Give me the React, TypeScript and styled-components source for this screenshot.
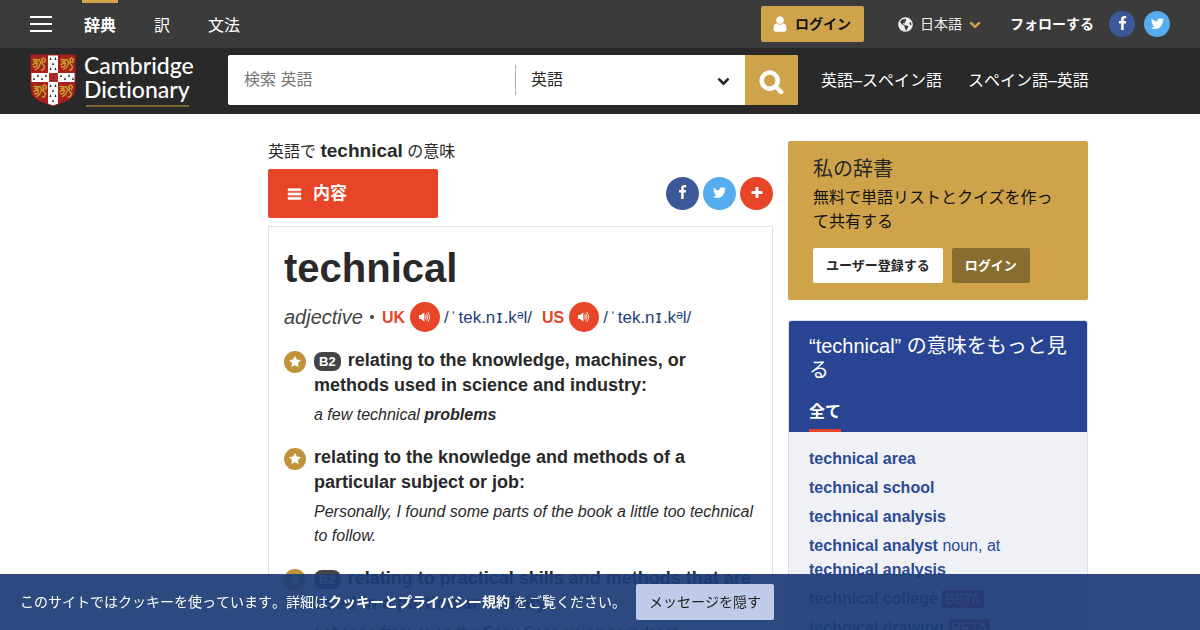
import React from 'react';
import styled, { createGlobalStyle } from 'styled-components';
import { FaGlobeAmericas } from 'react-icons/fa';

const GlobalStyle = createGlobalStyle`
  *, *::before, *::after { box-sizing: border-box; }
  body {
    margin: 0;
    background: #fff;
    color: #292929;
    font: 16px/24px "Liberation Sans", "Noto Sans CJK JP", sans-serif;
  }
  #root { height: 100vh; overflow: hidden; }
  a { color: inherit; text-decoration: none; }
  button, input, select { font: inherit; color: inherit; border: 0; margin: 0; padding: 0; background: none; }
  button { cursor: pointer; }
  h1, h2, h3, p, ul { margin: 0; padding: 0; font-weight: normal; font-size: inherit; }
  ul { list-style: none; }
`;

const paths = {
  facebook:
    'M1343 12v264h-157q-86 0-116 36t-30 108v189h293l-39 296h-254v759h-306v-759h-255v-296h255v-218q0-186 104-288.500t277-102.500q147 0 228 12z',
  twitter:
    'M1684 408q-67 98-162 167 1 14 1 42 0 130-38 259.500t-115.500 248.500-184.500 210.500-258 146-323 54.500q-271 0-496-145 35 4 78 4 225 0 401-138-105-2-188-64.500t-114-159.500q33 5 61 5 43 0 85-11-112-23-185.500-111.500t-73.500-205.500v-4q68 38 146 41-66-44-105-115t-39-154q0-88 44-163 121 149 294.500 238.500t371.500 99.500q-8-38-8-74 0-134 94.500-228.500t228.500-94.500q140 0 236 102 109-21 205-78-37 115-142 178 93-10 186-50z',
  plus: 'M1600 736v192q0 40-28 68t-68 28h-416v416q0 40-28 68t-68 28h-192q-40 0-68-28t-28-68v-416h-416q-40 0-68-28t-28-68v-192q0-40 28-68t68-28h416v-416q0-40 28-68t68-28h192q40 0 68 28t28 68v416h416q40 0 68 28t28 68z',
  user: 'M1536 1399q0 109-62.500 187t-150.500 78h-854q-88 0-150.500-78t-62.500-187q0-85 8.500-160.500t31.500-152 58.500-131 94-89 134.500-34.500q131 128 313 128t313-128q76 0 134.500 34.500t94 89 58.500 131 31.500 152 8.500 160.500zm-256-887q0 159-112.500 271.500t-271.500 112.500-271.500-112.500-112.500-271.500 112.500-271.500 271.500-112.500 271.500 112.500 112.500 271.500z',
  search:
    'M1216 832q0-185-131.500-316.500t-316.500-131.500-316.500 131.500-131.500 316.500 131.500 316.500 316.500 131.500 316.500-131.500 131.500-316.500zm512 832q0 52-38 90t-90 38q-54 0-90-38l-343-342q-179 124-399 124-143 0-273.500-55.500t-225-150-150-225-55.500-273.500 55.500-273.500 150-225 225-150 273.500-55.500 273.500 55.500 225 150 150 225 55.500 273.500q0 220-124 399l343 343q37 37 37 90z',
  chevron:
    'M1683 808l-742 741q-19 19-45 19t-45-19l-742-741q-19-19-19-45.500t19-45.500l166-165q19-19 45-19t45 19l531 531 531-531q19-19 45-19t45 19l166 165q19 19 19 45.500t-19 45.500z',
  bars: 'M128 320h1536v256h-1536zM128 832h1536v256h-1536zM128 1344h1536v256h-1536z',
  star: 'M1728 647q0 22-26 48l-363 354 86 500q1 7 1 20 0 21-10.500 35.500t-30.500 14.500q-19 0-40-12l-449-236-449 236q-22 12-40 12-21 0-31.500-14.500t-10.500-35.500q0-6 2-20l86-500-364-354q-25-27-25-48 0-37 56-46l502-73 225-455q19-41 49-41t49 41l225 455 502 73q56 9 56 46z',
};

const Icon = ({ name, size, bold }: { name: keyof typeof paths; size: number; bold?: boolean }) => (
  <svg
    width={size}
    height={size}
    viewBox="0 0 1792 1792"
    fill="currentColor"
    stroke={bold ? 'currentColor' : 'none'}
    strokeWidth={bold ? 70 : 0}
    aria-hidden="true"
  >
    <path d={paths[name]} />
  </svg>
);

const Speaker = () => (
  <svg width="14" height="12" viewBox="0 0 16 14" fill="none" stroke="#fff" aria-hidden="true">
    <path d="M1 4.800h2.300L7.300 1.500v11L3.300 9.200H1z" fill="#fff" stroke="none" />
    <path d="M8.800 5q1.300 2 0 4M10.100 3.200q2.700 3.800 0 7.600M11.500 1.500q4.100 5.500 0 11" strokeWidth="1" strokeLinecap="round" />
  </svg>
);

const Lion = ({ x, y }: { x: number; y: number }) => (
  <g transform={`translate(${x} ${y})`} fill="none" stroke="#c99a2a" strokeWidth="1.500" strokeLinecap="round">
    <path d="M1 2.500h3M2 4.500l3 .5M1 7.500l4-2M4 3.500l3-1 1 2 2 1.500M5.500 6l-1 3.500-3 .5M8.500 6l-2 4.500-3 2M10 6.500l2.500 3-1 3-2 .5M11 5l-1.500-2.500 2-1.500 2 1.500-1 3" />
    <path d="M6 1l1.500.5M9.500 8l-.5 3M13 7l.5 2" stroke="#6b4a1a" strokeWidth="1" />
  </g>
);

const Crest = () => (
  <svg width="46" height="53" viewBox="0 0 46 53" aria-hidden="true">
    <defs>
      <clipPath id="shield">
        <path d="M1 1h44v33q0 9-9 13l-13 5-13-5q-9-4-9-13z" />
      </clipPath>
    </defs>
    <g clipPath="url(#shield)">
      <path fill="#a81f1c" d="M0 0h46v53H0z" />
      <path fill="#fff" d="M18 1h10v52H18zM1 19h44v9H1z" />
      <path fill="#c1272a" d="M19 19h9v9h-9z" />
      <path fill="#7a3a1c" d="M20 20h7v1h-7zM20 26h7v1h-7zM22 22h3v3h-3z" />
      <path
        fill="#26262b"
        d="M20.500 3l1 3h-2zM25.500 3l1 3h-2zM23 8l1 3h-2zM20.500 13l1 3h-2zM25.500 13l1 3h-2zM20.500 30l1 3h-2zM25.500 30l1 3h-2zM23 35l1 3h-2zM20.500 40l1 3h-2zM25.500 40l1 3h-2zM23 45l1 3h-2zM4 23l1 3H3zM8 20l1 3H7zM12 23l1 3h-2zM16 20l1 3h-2zM31 20l1 3h-2zM35 23l1 3h-2zM39 20l1 3h-2zM43 23l1 3h-2z"
      />
      <Lion x={2} y={3} />
      <Lion x={30} y={3} />
      <Lion x={3} y={30} />
      <Lion x={29} y={30} />
    </g>
    <path d="M1 1h44v33q0 9-9 13l-13 5-13-5q-9-4-9-13z" fill="none" stroke="#a51c20" strokeWidth="1" />
  </svg>
);

const TopBar = styled.div`
  display: flex;
  align-items: center;
  height: 48px;
  padding: 0 30px;
  background: #3b3b3b;
  color: #fff;
`;
const MenuButton = styled.button`
  display: grid;
  gap: 5px;
  width: 22px;
  margin-right: 30px;
`;
const MenuLine = styled.span`
  height: 2px;
  background: #fff;
`;
const Tabs = styled.nav`
  display: flex;
  gap: 34px;
  align-self: stretch;
`;
const Tab = styled.a<{ $active?: boolean }>`
  padding: 11px 2px 0;
  border-top: 3px solid ${(p) => (p.$active ? '#cfa34a' : 'transparent')};
  font-weight: ${(p) => (p.$active ? 'bold' : 'normal')};
`;
const TopActions = styled.div`
  display: flex;
  align-items: center;
  margin-left: auto;
  font-size: 14px;
`;
const Login = styled.button`
  display: flex;
  align-items: center;
  gap: 6px;
  height: 36px;
  padding: 0 13px 0 10px;
  margin-right: 34px;
  border-radius: 2px;
  background: #cfa34a;
  color: #111;
  font-weight: bold;
  svg { color: #fff; }
`;
const Language = styled.button`
  display: flex;
  align-items: center;
  gap: 7px;
  margin-right: 29px;
  color: #eee;
  svg:last-child { color: #cfa34a; }
`;
const Follow = styled.strong`
  margin-right: 15px;
`;
const Round = styled.a<{ $size: number; $color: string }>`
  display: inline-flex;
  align-items: center;
  justify-content: center;
  width: ${(p) => p.$size}px;
  height: ${(p) => p.$size}px;
  padding-bottom: 2px;
  border-radius: 50%;
  background: ${(p) => p.$color};
  color: #fff;
`;
const SocialPair = styled.div`
  display: flex;
  gap: 9px;
`;

const SearchBar = styled.div`
  display: flex;
  align-items: center;
  height: 66px;
  padding: 0 30px 2px;
  background: #292929;
  color: #fff;
`;
const Logo = styled.a`
  display: flex;
  align-items: end;
  gap: 8px;
  width: 198px;
`;
const LogoText = styled.span`
  font: 500 23px/24px Lato, sans-serif;
  font-variant-ligatures: none;
`;
const LogoLine = styled.span`
  display: block;
  width: 103px;
  height: 2px;
  margin: 4px 0 0 2px;
  background: #7e652f;
`;
const SearchForm = styled.form`
  display: flex;
  flex: 0 1 570px;
  height: 50px;
  border-radius: 2px;
  overflow: hidden;
  background: #fff;
  color: #292929;
`;
const SearchInput = styled.input`
  flex: 1;
  min-width: 0;
  padding: 0 16px;
  outline: 0;
  &::placeholder { color: #757575; opacity: 1; }
`;
const Dataset = styled.label`
  display: grid;
  align-items: center;
  width: 230px;
  height: 30px;
  margin: 10px 0;
  border-left: 1px solid #b5b5b5;
  & > * { grid-area: 1 / 1; }
  svg { justify-self: end; margin-right: 15px; pointer-events: none; }
`;
const DatasetSelect = styled.select`
  width: 100%;
  padding-left: 15px;
  appearance: none;
  outline: 0;
`;
const SearchButton = styled.button`
  display: grid;
  place-items: center;
  width: 53px;
  padding-top: 2px;
  background: #cfa34a;
  color: #fff;
`;
const QuickLinks = styled.nav`
  display: flex;
  gap: 26px;
  padding-top: 2px;
  margin-left: 23px;
  white-space: nowrap;
  font-kerning: none;
`;

const Page = styled.div`
  display: grid;
  grid-template-columns: minmax(0, 1fr) 300px;
  gap: 15px;
  max-width: 976px;
  margin: 0 auto;
  padding: 27px 0 0 156px;
`;
const Title = styled.h1`
  height: 28px;
  line-height: 20px;
  font-kerning: none;
  b { font-size: 19px; }
`;
const Tools = styled.div`
  display: flex;
  align-items: center;
  justify-content: space-between;
  margin-bottom: 8px;
`;
const Contents = styled.button`
  display: flex;
  align-items: center;
  gap: 11px;
  width: 170px;
  height: 49px;
  padding: 0 19px;
  border-radius: 2px;
  background: #e84427;
  color: #fff;
  font-size: 17px;
  font-weight: bold;
`;
const Share = styled.div`
  display: flex;
  gap: 4px;
`;
const Entry = styled.article`
  padding: 15px;
  border: 1px solid #e2e2e2;
`;
const Headword = styled.h2`
  font-size: 40px;
  line-height: 52px;
  font-weight: bold;
`;
const Pronunciations = styled.div`
  display: flex;
  align-items: center;
  height: 30px;
  margin: 8px 0 16px;
  color: #1d3e7c;
  font-size: 17px;
`;
const PartOfSpeech = styled.i`
  margin-right: 7px;
  color: #444;
  font-size: 20px;
`;
const Dot = styled.span`
  width: 4px;
  height: 4px;
  margin-right: 8px;
  border-radius: 50%;
  background: #444;
`;
const Region = styled.b`
  padding-top: 2px;
  margin-right: 5px;
  color: #e84427;
  font-size: 16px;
`;
const Listen = styled.button`
  display: grid;
  place-items: center;
  width: 30px;
  height: 30px;
  border-radius: 50%;
  background: #e84427;
`;
const Ipa = styled.span`
  display: flex;
  gap: 2px;
  padding-top: 2px;
  margin: 0 10px 0 4px;
  sup { font-size: 12px; line-height: 0; vertical-align: 4px; }
`;
const SmallCapI = styled.span`
  padding: 0 1px;
  font-family: "DejaVu Sans", sans-serif;
  line-height: 0;
`;
const Sense = styled.section`
  display: grid;
  grid-template-columns: 22px 1fr;
  column-gap: 8px;
  margin-bottom: 18px;
`;
const StarBadge = styled.span`
  display: grid;
  place-items: center;
  width: 22px;
  height: 22px;
  margin-top: 3px;
  border-radius: 50%;
  background: #c0923a;
  color: #fff;
`;
const Definition = styled.h3`
  margin-bottom: 5px;
  font-size: 18px;
  line-height: 25px;
  font-weight: bold;
`;
const Level = styled.span`
  display: inline-block;
  margin-right: 7px;
  padding: 0 5px;
  border-radius: 8px;
  background: #444;
  color: #fff;
  font-size: 13px;
  line-height: 19px;
`;
const Side = styled.aside`
  display: grid;
  gap: 20px;
  align-content: start;
`;
const MyDictionary = styled.section`
  padding: 16px 25px 17px;
  border-radius: 2px;
  background: #cfa34a;
  color: #111;
  h2 { color: #292929; font-size: 20px; line-height: 24px; margin-bottom: 5px; }
`;
const Buttons = styled.div`
  display: flex;
  gap: 9px;
  margin-top: 14px;
`;
const SmallButton = styled.button<{ $dark?: boolean }>`
  height: 35px;
  padding: 0 13px;
  border-radius: 2px;
  background: ${(p) => (p.$dark ? '#886c30' : '#fff')};
  color: ${(p) => (p.$dark ? '#fff' : '#292929')};
  font-size: 13px;
  font-weight: bold;
`;
const More = styled.section`
  border: 1px solid #dcdfea;
  border-radius: 3px;
  overflow: hidden;
  background: #f0f1f7;
`;
const MoreHead = styled.header`
  padding: 13px 20px 0;
  background: #2a4494;
  color: #fff;
  h2 { margin-bottom: 18px; font-size: 20px; line-height: 24px; }
`;
const AllTab = styled.a`
  display: inline-block;
  height: 32px;
  border-bottom: 3px solid #e84427;
  font-weight: bold;
  vertical-align: top;
`;
const Words = styled.ul`
  display: grid;
  gap: 5px;
  padding: 15px 20px;
  color: #2a4a94;
  li { padding-right: 40px; }
`;
const Beta = styled.span`
  padding: 1px 3px;
  border-radius: 2px;
  background: #b3203c;
  color: #fff;
  font-size: 14px;
`;
const CookieBar = styled.div`
  position: fixed;
  inset: auto 0 0;
  display: flex;
  align-items: center;
  gap: 10px;
  padding: 10px 20px;
  background: rgba(28, 60, 118, 0.93);
  color: #fff;
  font-size: 14px;
  font-kerning: none;
`;
const Dismiss = styled.button`
  height: 36px;
  padding: 0 13px;
  border-radius: 2px;
  background: #c0cbe9;
  color: #222;
  font-kerning: none;
`;

const ListenTo = ({ region }: { region: string }) => (
  <>
    <Region>{region}</Region>
    <Listen aria-label={`${region} 発音`}>
      <Speaker />
    </Listen>
    <Ipa>
      <span>/</span>
      <span>ˈ</span>
      <span>
        tek.n<SmallCapI>ɪ</SmallCapI>.k<sup>ə</sup>l/
      </span>
    </Ipa>
  </>
);

const SenseBlock = ({ level, text, children }: { level?: string; text: string; children: React.ReactNode }) => (
  <Sense>
    <StarBadge>
      <Icon name="star" size={12} />
    </StarBadge>
    <div>
      <Definition>
        {level && <Level>{level}</Level>}
        {text}
      </Definition>
      <i>{children}</i>
    </div>
  </Sense>
);

export default function App() {
  return (
    <>
      <GlobalStyle />
      <header>
        <TopBar>
          <MenuButton aria-label="メニュー">
            <MenuLine />
            <MenuLine />
            <MenuLine />
          </MenuButton>
          <Tabs>
            <Tab href="#" $active>辞典</Tab>
            <Tab href="#">訳</Tab>
            <Tab href="#">文法</Tab>
          </Tabs>
          <TopActions>
            <Login>
              <Icon name="user" size={18} />
              ログイン
            </Login>
            <Language>
              <FaGlobeAmericas size={15} />
              日本語
              <Icon name="chevron" size={12} />
            </Language>
            <Follow>フォローする</Follow>
            <SocialPair>
              <Round href="#" $size={26} $color="#3b5998" aria-label="Facebook">
                <Icon name="facebook" size={15} />
              </Round>
              <Round href="#" $size={26} $color="#55acee" aria-label="Twitter">
                <Icon name="twitter" size={15} />
              </Round>
            </SocialPair>
          </TopActions>
        </TopBar>
        <SearchBar>
          <Logo href="#">
            <Crest />
            <LogoText>
              Cambridge
              <br />
              Dictionary
              <LogoLine />
            </LogoText>
          </Logo>
          <SearchForm>
            <SearchInput placeholder="検索 英語" aria-label="検索" />
            <Dataset>
              <DatasetSelect aria-label="辞書">
                <option>英語</option>
              </DatasetSelect>
              <Icon name="chevron" size={13} />
            </Dataset>
            <SearchButton type="button" aria-label="検索する">
              <Icon name="search" size={25} bold />
            </SearchButton>
          </SearchForm>
          <QuickLinks>
            <a href="#">英語–スペイン語</a>
            <a href="#">スペイン語–英語</a>
          </QuickLinks>
        </SearchBar>
      </header>
      <Page>
        <main>
          <Title>
            英語で <b>technical</b> の意味
          </Title>
          <Tools>
            <Contents>
              <Icon name="bars" size={15} bold />
              内容
            </Contents>
            <Share>
              <Round href="#" $size={33} $color="#3b5998" aria-label="Facebook">
                <Icon name="facebook" size={15} />
              </Round>
              <Round href="#" $size={33} $color="#55acee" aria-label="Twitter">
                <Icon name="twitter" size={15} />
              </Round>
              <Round href="#" $size={33} $color="#e84427" aria-label="その他">
                <Icon name="plus" size={14} />
              </Round>
            </Share>
          </Tools>
          <Entry>
            <Headword>technical</Headword>
            <Pronunciations>
              <PartOfSpeech>adjective</PartOfSpeech>
              <Dot />
              <ListenTo region="UK" />
              <ListenTo region="US" />
            </Pronunciations>
            <SenseBlock level="B2" text="relating to the knowledge, machines, or methods used in science and industry:">
              a few technical <b>problems</b>
            </SenseBlock>
            <SenseBlock text="relating to the knowledge and methods of a particular subject or job:">
              Personally, I found some parts of the book a little too technical to follow.
            </SenseBlock>
            <SenseBlock level="B2" text="relating to practical skills and methods that are used in a particular activity:">
              I change from even the Sony Scan using broadcast
            </SenseBlock>
          </Entry>
        </main>
        <Side>
          <MyDictionary>
            <h2>私の辞書</h2>
            <p>無料で単語リストとクイズを作って共有する</p>
            <Buttons>
              <SmallButton>ユーザー登録する</SmallButton>
              <SmallButton $dark>ログイン</SmallButton>
            </Buttons>
          </MyDictionary>
          <More>
            <MoreHead>
              <h2>“technical” の意味をもっと見る</h2>
              <AllTab href="#">全て</AllTab>
            </MoreHead>
            <Words>
              <li><a href="#"><b>technical area</b></a></li>
              <li><a href="#"><b>technical school</b></a></li>
              <li><a href="#"><b>technical analysis</b></a></li>
              <li><a href="#"><b>technical analyst</b> noun, at <b>technical analysis</b></a></li>
              <li><a href="#"><b>technical college</b> <Beta>BETA</Beta></a></li>
              <li><a href="#"><b>technical drawing</b> <Beta>BETA</Beta></a></li>
            </Words>
          </More>
        </Side>
      </Page>
      <CookieBar>
        <span>
          このサイトではクッキーを使っています。詳細は<a href="#"><b>クッキーとプライバシー規約</b></a> をご覧ください。
        </span>
        <Dismiss>メッセージを隠す</Dismiss>
      </CookieBar>
    </>
  );
}
